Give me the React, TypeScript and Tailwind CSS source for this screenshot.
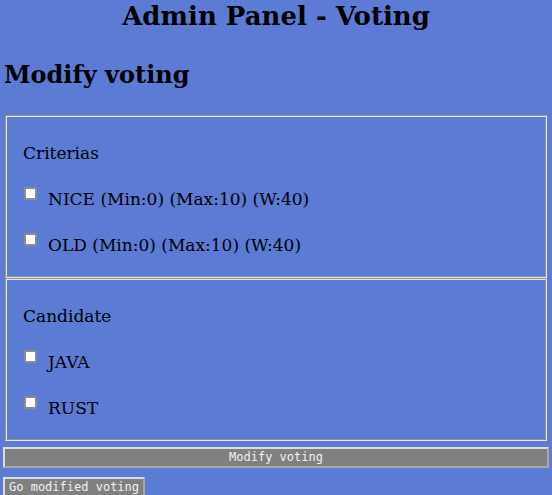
import React from "react";

const Row = ({ label }: { label: string }) => (
  <label className="flex h-[46px] leading-[46px]">
    <input
      type="checkbox"
      className="appearance-none mt-[11px] ml-[1px] w-[13px] h-[13px] bg-white border-2 border-[#8c8c8c] rounded-[2px] shrink-0"
    />
    <span className="ml-[11px]">{label}</span>
  </label>
);

const Group = ({ title, items }: { title: string; items: string[] }) => (
  <fieldset className="mx-[2px] border-2 [border-style:groove] border-[#e6e6e6] pt-[13px] pb-[8px] px-[16px]">
    <div className="h-[46px] leading-[46px]">{title}</div>
    {items.map((it) => (
      <Row key={it} label={it} />
    ))}
  </fieldset>
);

export default function App() {
  return (
    <div
      className="min-h-screen bg-[#5b7bd5] px-[3px] text-black text-[17px]"
      style={{ fontFamily: '"DejaVu Serif", serif' }}
    >
      <h1 className="text-center font-bold text-[26px] leading-[32px]">
        Admin Panel - Voting
      </h1>
      <h2 className="mt-[28px] font-bold text-[24px] leading-[30px] px-[1px]">
        Modify voting
      </h2>
      <form className="mt-[25px]">
        <Group
          title="Criterias"
          items={["NICE (Min:0) (Max:10) (W:40)", "OLD (Min:0) (Max:10) (W:40)"]}
        />
        <Group title="Candidate" items={["JAVA", "RUST"]} />
        <button
          type="button"
          className="mt-[6px] block w-full h-[21px] bg-[#808080] text-[#f2f2f2] text-[12px] leading-[17px] border-2 border-[#dcdcdc] border-r-[#a6a6a6] border-b-[#a6a6a6]"
          style={{ fontFamily: '"DejaVu Sans Mono", monospace' }}
        >
          Modify voting
        </button>
      </form>
      <button
        type="button"
        className="mt-[9px] block h-[21px] px-[4px] bg-[#808080] text-[#f2f2f2] text-[12px] leading-[17px] border-2 border-[#dcdcdc] border-r-[#a6a6a6] border-b-[#a6a6a6]"
        style={{ fontFamily: '"DejaVu Sans Mono", monospace' }}
      >
        Go modified voting
      </button>
    </div>
  );
}
